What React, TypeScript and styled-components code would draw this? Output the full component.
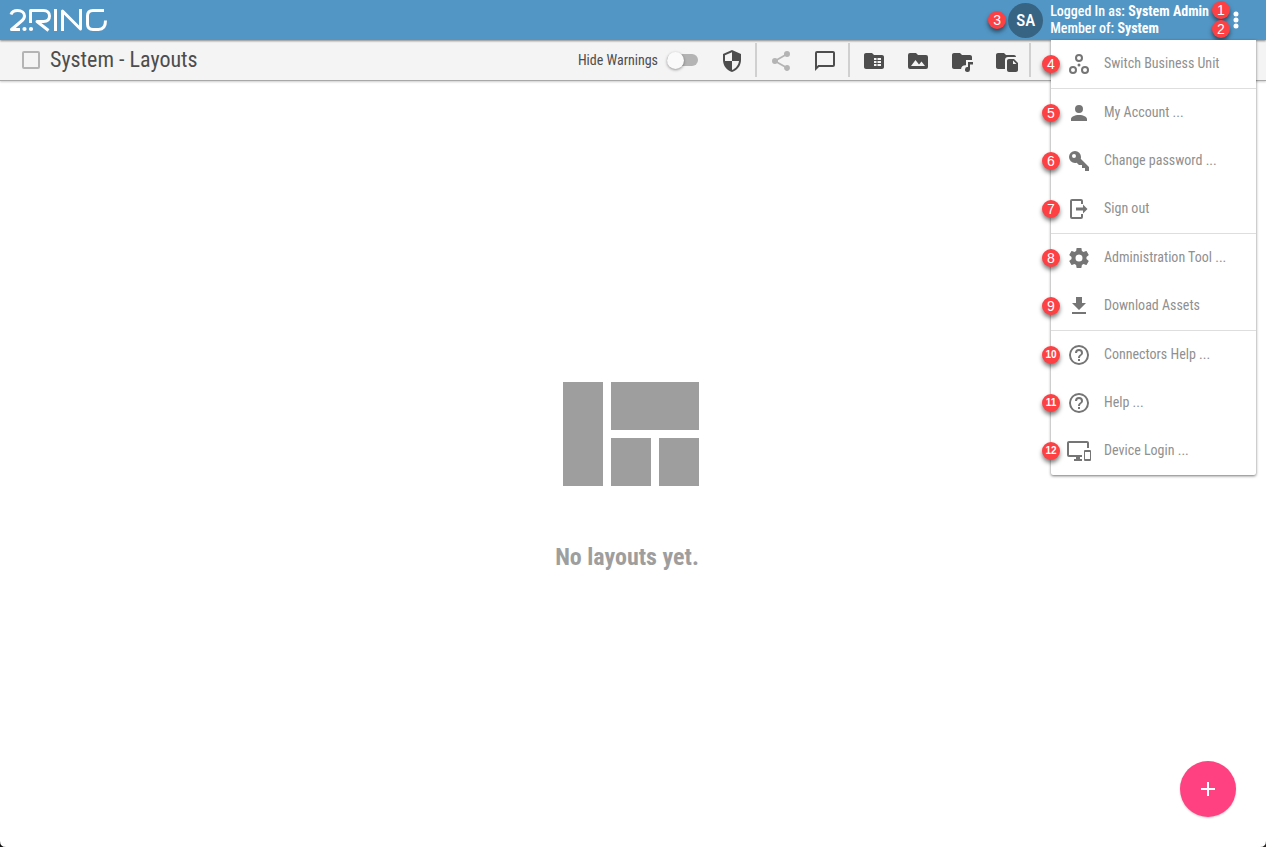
import React from 'react';
import styled, { createGlobalStyle, css } from 'styled-components';

const GlobalStyle = createGlobalStyle`
  *, *::before, *::after { box-sizing: border-box; }
  html, body, #root { height: 100%; }
  body {
    margin: 0;
    background: #fff;
    color: #4d4d4d;
    font-family: "Roboto Condensed", "Liberation Sans Narrow", Roboto, sans-serif;
    font-size: 14px;
  }
  button { font: inherit; color: inherit; background: none; border: 0; padding: 0; cursor: pointer; }
`;

const icons = {
  shield: 'M12,12H19C18.47,16.11 15.72,19.78 12,20.92V12H5V6.3L12,3.19M12,1L3,5V11C3,16.55 6.84,21.73 12,23C17.16,21.73 21,16.55 21,11V5L12,1Z',
  share: 'M18,16.08C17.24,16.08 16.56,16.38 16.04,16.85L8.91,12.7C8.96,12.47 9,12.24 9,12C9,11.76 8.96,11.53 8.91,11.3L15.96,7.19C16.5,7.69 17.21,8 18,8A3,3 0 0,0 21,5A3,3 0 0,0 18,2A3,3 0 0,0 15,5C15,5.24 15.04,5.47 15.09,5.7L8.04,9.81C7.5,9.31 6.79,9 6,9A3,3 0 0,0 3,12A3,3 0 0,0 6,15C6.79,15 7.5,14.69 8.04,14.19L15.16,18.34C15.11,18.55 15.08,18.77 15.08,19C15.08,20.61 16.39,21.91 18,21.91C19.61,21.91 20.92,20.61 20.92,19A2.92,2.92 0 0,0 18,16.08Z',
  comment: 'M20,2H4A2,2 0 0,0 2,4V22L6,18H20A2,2 0 0,0 22,16V4C22,2.89 21.1,2 20,2M20,16H5.17L4,17.17V4H20V16Z',
  folderTable: 'M20 6H12L10 4H4C2.9 4 2 4.9 2 6V18C2 19.1 2.9 20 4 20H20C21.1 20 22 19.1 22 18V8C22 6.9 21.1 6 20 6M14.5 17H12V15H14.5V17M14.5 14H12V12H14.5V14M14.5 11H12V9H14.5V11M19 17H15.5V15H19V17M19 14H15.5V12H19V14M19 11H15.5V9H19V11Z',
  folderImage: 'M5,17L9.5,11L13,15.5L15.5,12.5L19,17M20,6H12L10,4H4A2,2 0 0,0 2,6V18A2,2 0 0,0 4,20H20A2,2 0 0,0 22,18V8A2,2 0 0,0 20,6Z',
  folderMusic: 'M10 4L12 6H20C21.1 6 22 6.9 22 8V11H16V16.2C13.2 15.9 11.2 17.6 11.1 20H4C2.9 20 2 19.1 2 18V6C2 4.9 2.9 4 4 4H10M18 13H23V15.5H20V20.5A2.5 2.5 0 1 1 18 18.05V13Z',
  folderFile: 'M10 4L12 6H20C21.1 6 22 6.9 22 8H14C12.3 8 11 9.3 11 11V20H4C2.9 20 2 19.1 2 18V6C2 4.9 2.9 4 4 4H10M15 10H20L24 14V21C24 22.1 23.1 23 22 23H15C13.9 23 13 22.1 13 21V12C13 10.9 13.9 10 15 10M19 11.5V15H22.5L19 11.5Z',
  units: 'M12 2A4 4 0 1 0 12 10A4 4 0 1 0 12 2M12 4A2 2 0 1 1 12 8A2 2 0 1 1 12 4M6 14A4 4 0 1 0 6 22A4 4 0 1 0 6 14M6 16A2 2 0 1 1 6 20A2 2 0 1 1 6 16M18 14A4 4 0 1 0 18 22A4 4 0 1 0 18 14M18 16A2 2 0 1 1 18 20A2 2 0 1 1 18 16M12 11.5A1.5 1.5 0 1 0 12 14.5A1.5 1.5 0 1 0 12 11.5Z',
  account: 'M12,4A4,4 0 0,1 16,8A4,4 0 0,1 12,12A4,4 0 0,1 8,8A4,4 0 0,1 12,4M12,14C16.42,14 20,15.79 20,18V20H4V18C4,15.79 7.58,14 12,14Z',
  key: 'M22,18V22H18V19H15V16H12L9.74,13.74C9.19,13.91 8.61,14 8,14A6,6 0 0,1 2,8A6,6 0 0,1 8,2A6,6 0 0,1 14,8C14,8.61 13.91,9.19 13.74,9.74L22,18M7,5A2,2 0 0,0 5,7A2,2 0 0,0 7,9A2,2 0 0,0 9,7A2,2 0 0,0 7,5Z',
  signOut: 'M5 2H14A2 2 0 0 1 16 4V7H14V4H5V20H14V17H16V20A2 2 0 0 1 14 22H5A2 2 0 0 1 3 20V4A2 2 0 0 1 5 2M9 10.5H16V7.5L20.5 12L16 16.5V13.5H9Z',
  cog: 'M12,15.5A3.5,3.5 0 0,1 8.5,12A3.5,3.5 0 0,1 12,8.5A3.5,3.5 0 0,1 15.5,12A3.5,3.5 0 0,1 12,15.5M19.43,12.97C19.47,12.65 19.5,12.33 19.5,12C19.5,11.67 19.47,11.34 19.43,11L21.54,9.37C21.73,9.22 21.78,8.95 21.66,8.73L19.66,5.27C19.54,5.05 19.27,4.96 19.05,5.05L16.56,6.05C16.04,5.66 15.5,5.32 14.87,5.07L14.5,2.42C14.46,2.18 14.25,2 14,2H10C9.75,2 9.54,2.18 9.5,2.42L9.13,5.07C8.5,5.32 7.96,5.66 7.44,6.05L4.95,5.05C4.73,4.96 4.46,5.05 4.34,5.27L2.34,8.73C2.21,8.95 2.27,9.22 2.46,9.37L4.57,11C4.53,11.34 4.5,11.67 4.5,12C4.5,12.33 4.53,12.65 4.57,12.97L2.46,14.63C2.27,14.78 2.21,15.05 2.34,15.27L4.34,18.73C4.46,18.95 4.73,19.03 4.95,18.95L7.44,17.94C7.96,18.34 8.5,18.68 9.13,18.93L9.5,21.58C9.54,21.82 9.75,22 10,22H14C14.25,22 14.46,21.82 14.5,21.58L14.87,18.93C15.5,18.67 16.04,18.34 16.56,17.94L19.05,18.95C19.27,19.03 19.54,18.95 19.66,18.73L21.66,15.27C21.78,15.05 21.73,14.78 21.54,14.63L19.43,12.97Z',
  download: 'M5,20H19V18H5M19,9H15V3H9V9H5L12,16L19,9Z',
  help: 'M11,18H13V16H11V18M12,2A10,10 0 0,0 2,12A10,10 0 0,0 12,22A10,10 0 0,0 22,12A10,10 0 0,0 12,2M12,20C7.59,20 4,16.41 4,12C4,7.59 7.59,4 12,4C16.41,4 20,7.59 20,12C20,16.41 16.41,20 12,20M12,6A4,4 0 0,0 8,10H10A2,2 0 0,1 12,8A2,2 0 0,1 14,10C14,12 11,11.75 11,15H13C13,12.75 16,12.5 16,10A4,4 0 0,0 12,6Z',
  devices: 'M23,11H18A1,1 0 0,0 17,12V21A1,1 0 0,0 18,22H23A1,1 0 0,0 24,21V12A1,1 0 0,0 23,11M23,20H18V13H23V20M20,2H2C0.89,2 0,2.89 0,4V16A2,2 0 0,0 2,18H9V20H7V22H15V20H13V18H15V16H2V4H20V9H22V4C22,2.89 21.1,2 20,2Z',
  plus: 'M19,13H13V19H11V13H5V11H11V5H13V11H19V13Z',
  more: 'M12 3.500A2.500 2.500 0 1 0 12 8.500A2.500 2.500 0 1 0 12 3.500M12 9.500A2.500 2.500 0 1 0 12 14.500A2.500 2.500 0 1 0 12 9.500M12 15.500A2.500 2.500 0 1 0 12 20.500A2.500 2.500 0 1 0 12 15.500Z',
};
type IconName = keyof typeof icons;

const IconSvg = styled.svg`
  display: block;
  flex: none;
  fill: currentColor;
`;
const Icon = ({ name, size = 24 }: { name: IconName; size?: number }) => (
  <IconSvg viewBox="0 0 24 24" width={size} height={size} aria-hidden="true">
    <path fillRule="evenodd" d={icons[name]} />
  </IconSvg>
);

const Page = styled.div`
  min-height: 100%;
  display: flex;
  flex-direction: column;
  position: relative;
  overflow: hidden;
`;

const Header = styled.header`
  display: flex;
  align-items: center;
  justify-content: space-between;
  height: 40px;
  padding: 0 18px 0 9px;
  background: #5296c5;
  color: #fff;
  position: relative;
  z-index: 2;
  box-shadow: 0 1px 2px rgba(0, 0, 0, 0.45);
`;

const Account = styled.div`
  display: flex;
  align-items: center;
`;

const Avatar = styled.span`
  display: grid;
  place-items: center;
  width: 35px;
  height: 35px;
  margin: 0 7px 0 2px;
  border-radius: 50%;
  background: #386484;
  font-size: 17px;
  font-weight: 500;
`;

const Identity = styled.div`
  font-size: 14px;
  line-height: 17px;
  font-weight: 500;
  white-space: nowrap;
`;

const MarkerStack = styled.div`
  display: flex;
  flex-direction: column;
  gap: 1px;
  margin-left: 3px;
  padding-bottom: 2px;
`;

const Marker = styled.span<{ $small?: boolean }>`
  display: grid;
  place-items: center;
  flex: none;
  width: 18px;
  height: 18px;
  border-radius: 50%;
  background: #fd4044;
  color: #fff;
  font: ${p => (p.$small ? 'bold 10px' : '14px')}/18px "Liberation Sans", sans-serif;
  box-shadow: 0 3px 4px rgba(0, 0, 0, 0.5);
`;

const MenuButton = styled.button`
  width: 24px;
  margin-left: -6px;
`;

const Toolbar = styled.div`
  display: flex;
  align-items: center;
  height: 41px;
  padding-left: 22px;
  background: #f4f4f4;
  border-bottom: 1px solid #a8a8a8;
  box-shadow: 0 1px 2px rgba(0, 0, 0, 0.2);
`;

const Title = styled.label`
  display: flex;
  align-items: center;
  gap: 10px;
  flex: 1;
  font-size: 22px;
  line-height: 38px;
  white-space: nowrap;
  h1 { margin: 0; font: inherit; }
`;

const Check = styled.input`
  appearance: none;
  width: 18px;
  height: 18px;
  margin: 0;
  border: 2px solid #b4b4b4;
  border-radius: 2px;
`;

const SwitchLabel = styled.label`
  display: flex;
  align-items: center;
  gap: 9px;
  margin-right: 10px;
`;

const Switch = styled.input`
  appearance: none;
  display: flex;
  align-items: center;
  width: 31px;
  height: 12px;
  margin: 0;
  border-radius: 6px;
  background: #b4b4b4;
  &::before {
    content: "";
    width: 17px;
    height: 17px;
    border-radius: 50%;
    background: #fafafa;
    box-shadow: 0 1px 3px rgba(0, 0, 0, 0.4);
  }
`;

const ToolGroup = styled.div<{ $last?: boolean }>`
  display: flex;
  align-items: center;
  height: 34px;
  padding: 0 1px 0 2px;
  border-right: 2px solid #d0d0d0;
  ${p => p.$last && css`margin-right: 235px;`}
`;

const Tool = styled.button`
  display: grid;
  place-items: center;
  width: 44px;
  height: 34px;
  padding-top: 2px;
  &:disabled { color: #b4b4b4; }
`;

const Empty = styled.main`
  flex: 1;
  display: flex;
  flex-direction: column;
  align-items: center;
  justify-content: center;
  padding: 27px 12px 0 0;
  color: #9e9e9e;
  svg { display: block; margin-left: 8px; }
  p {
    margin: 55px 0 0;
    font-size: 24px;
    line-height: 32px;
    font-weight: 700;
  }
`;

const Menu = styled.nav`
  position: absolute;
  z-index: 3;
  top: 40px;
  right: 10px;
  width: 205px;
  background: #fff;
  color: #757575;
  border-radius: 0 0 2px 2px;
  box-shadow: 0 1px 3px rgba(0, 0, 0, 0.55);
`;

const MenuSection = styled.div`
  & + & { border-top: 1px solid #dedede; }
`;

const MenuItem = styled.button`
  display: flex;
  align-items: center;
  width: 100%;
  height: 48px;
  font-size: 14px;
  text-align: left;
  ${Marker} { margin: 0 7px 0 -9px; }
`;

const ItemText = styled.span`
  margin-left: 13px;
  padding-bottom: 2px;
  color: #909090;
  white-space: nowrap;
`;

const AddButton = styled.button`
  position: absolute;
  right: 30px;
  bottom: 30px;
  display: grid;
  place-items: center;
  width: 56px;
  height: 56px;
  border-radius: 50%;
  background: #ff4081;
  color: #fff;
  box-shadow: 0 1px 2px rgba(0, 0, 0, 0.2);
`;

const Corner = styled.svg<{ $right?: boolean }>`
  position: absolute;
  bottom: 0;
  ${p => (p.$right ? 'right: 0; transform: scaleX(-1);' : 'left: 0;')}
`;

const Logo = () => (
  <svg width="100" height="24" viewBox="0 0 100 24" role="img" aria-label="2Ring" fill="none" stroke="#fff" strokeWidth="3" strokeLinejoin="round">
    <path d="M2 6.5C3 3.5 5.5 2.5 8.5 2.5C13 2.5 15.5 5 15.5 8C15.5 10.5 14 12 12 13.5L2.500 21.500H11" />
    <path d="M21.5 15V2.5H34.5C38.5 2.5 40.5 5 40.5 8C40.5 11.5 38.5 13.5 34.5 13.5H28L39.5 22.5" />
    <path d="M46.5 1V23" />
    <path d="M53.500 23V3L71.500 21V1" />
    <path d="M95 2.500H84C80 2.500 78.500 4.500 78.500 8V16C78.500 20 80.500 21.500 84 21.500H89.500C94 21.500 96.500 19 96.500 12.500" />
    <g fill="#fff" stroke="none"><circle cx="15.500" cy="21" r="2.100" /><circle cx="22" cy="21" r="2.100" /></g>
  </svg>
);

type Item = { n: number; icon: IconName; text: string };
const sections: Item[][] = [
  [{ n: 4, icon: 'units', text: 'Switch Business Unit' }],
  [
    { n: 5, icon: 'account', text: 'My Account ...' },
    { n: 6, icon: 'key', text: 'Change password ...' },
    { n: 7, icon: 'signOut', text: 'Sign out' },
  ],
  [
    { n: 8, icon: 'cog', text: 'Administration Tool ...' },
    { n: 9, icon: 'download', text: 'Download Assets' },
  ],
  [
    { n: 10, icon: 'help', text: 'Connectors Help ...' },
    { n: 11, icon: 'help', text: 'Help ...' },
    { n: 12, icon: 'devices', text: 'Device Login ...' },
  ],
];

export default function App() {
  return (
    <Page>
      <GlobalStyle />
      <Header>
        <Logo />
        <Account>
          <Marker>3</Marker>
          <Avatar>SA</Avatar>
          <Identity>
            <div>Logged In as: <b>System Admin</b></div>
            <div>Member of: <b>System</b></div>
          </Identity>
          <MarkerStack>
            <Marker>1</Marker>
            <Marker>2</Marker>
          </MarkerStack>
          <MenuButton aria-label="Account menu"><Icon name="more" /></MenuButton>
        </Account>
      </Header>
      <Toolbar>
        <Title>
          <Check type="checkbox" />
          <h1>System - Layouts</h1>
        </Title>
        <SwitchLabel>
          Hide Warnings
          <Switch type="checkbox" role="switch" />
        </SwitchLabel>
        <ToolGroup>
          <Tool aria-label="Security"><Icon name="shield" /></Tool>
        </ToolGroup>
        <ToolGroup>
          <Tool aria-label="Share" disabled><Icon name="share" /></Tool>
          <Tool aria-label="Messages"><Icon name="comment" /></Tool>
        </ToolGroup>
        <ToolGroup $last>
          <Tool aria-label="Data folder"><Icon name="folderTable" /></Tool>
          <Tool aria-label="Image folder"><Icon name="folderImage" /></Tool>
          <Tool aria-label="Sound folder"><Icon name="folderMusic" /></Tool>
          <Tool aria-label="File folder"><Icon name="folderFile" /></Tool>
        </ToolGroup>
      </Toolbar>
      <Empty>
        <svg width="136" height="104" viewBox="0 0 136 104" fill="currentColor" aria-hidden="true">
          <path d="M0 0H40V104H0ZM48 0H136V48H48ZM48 56H88V104H48ZM96 56H136V104H96Z" />
        </svg>
        <p>No layouts yet.</p>
      </Empty>
      <Menu aria-label="Account">
        {sections.map(items => (
          <MenuSection key={items[0].n}>
            {items.map(item => (
              <MenuItem key={item.n}>
                <Marker $small={item.n > 9}>{item.n}</Marker>
                <Icon name={item.icon} />
                <ItemText>{item.text}</ItemText>
              </MenuItem>
            ))}
          </MenuSection>
        ))}
      </Menu>
      <AddButton aria-label="Add layout"><Icon name="plus" /></AddButton>
      <Corner width="6" height="6" viewBox="0 0 6 6" aria-hidden="true"><path d="M0 0Q0 6 6 6H0Z" fill="#111" /></Corner>
      <Corner $right width="6" height="6" viewBox="0 0 6 6" aria-hidden="true"><path d="M0 0Q0 6 6 6H0Z" fill="#2a2118" /></Corner>
    </Page>
  );
}
